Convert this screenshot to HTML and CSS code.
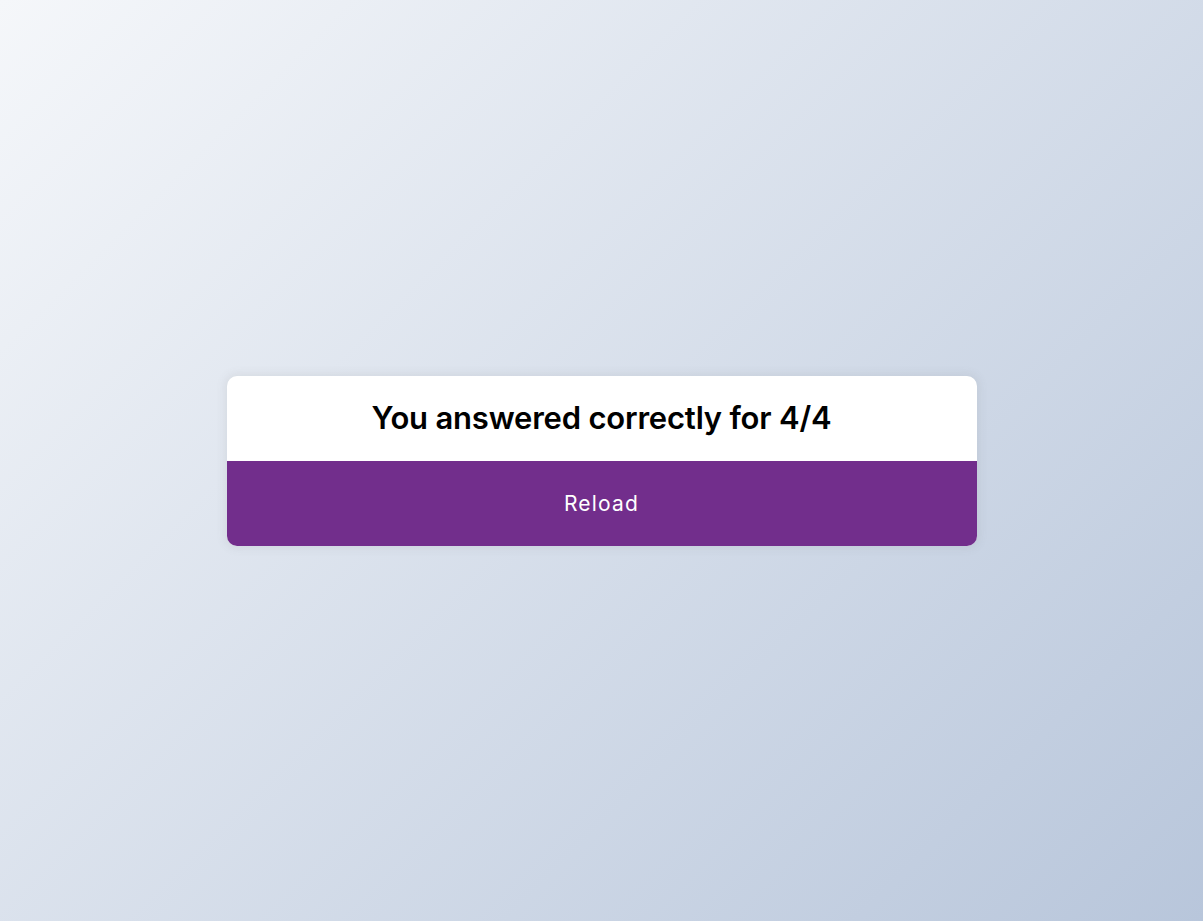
FILE: index.html
```html
<!DOCTYPE html>
<html lang="en">
<head>
<meta charset="UTF-8">
<title>Quiz</title>
<link rel="stylesheet" href="styles.css">
</head>
<body>
<div class="quiz-container">
  <h2 class="result">You answered correctly for 4/4</h2>
  <button class="reload">Reload</button>
</div>
</body>
</html>
```

FILE: styles.css
```css
* { box-sizing: border-box; }
html, body { margin: 0; height: 100%; }
body {
  background-color: #b8c6db;
  background-image: linear-gradient(315deg, #b8c6db 0%, #f5f7fa 100%);
  font-family: "Inter", "Noto Sans", sans-serif;
  display: flex;
  align-items: center;
  justify-content: center;
  overflow: hidden;
}
.quiz-container {
  width: 750px;
  background: #fff;
  border-radius: 10px;
  box-shadow: 0 0 10px 2px rgba(100, 100, 100, 0.1);
  overflow: hidden;
  display: flex;
  flex-direction: column;
}
.result {
  margin: 0;
  height: 85px;
  padding-bottom: 2px;
  display: flex;
  align-items: center;
  justify-content: center;
  font-size: 31px;
  font-weight: 600;
  letter-spacing: -0.2px;
  color: #000;
}
.reload {
  height: 85px;
  border: none;
  background: #722e8c;
  color: #fff;
  font-family: inherit;
  font-size: 21px;
  font-weight: 400;
  letter-spacing: 1.2px;
  cursor: pointer;
}
```
